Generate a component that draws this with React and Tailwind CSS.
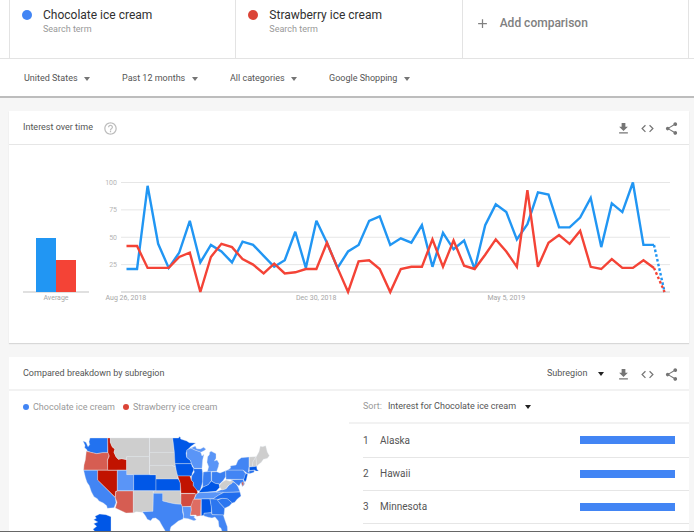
import { MdAdd, MdCode, MdGetApp, MdHelpOutline, MdShare } from "react-icons/md";

const BLUE = "#2196f3";
const RED = "#f44336";

const chocolate = [
  21, 21, 97, 44, 22, 36, 65, 27, 43, 37, 27, 46, 43, 33, 23, 29, 55, 22, 65,
  45, 22, 37, 43, 65, 69, 43, 49, 45, 61, 23, 54, 39, 47, 21, 61, 80, 73, 48,
  62, 91, 89, 59, 59, 68, 86, 41, 81, 73, 100, 43, 43, 0,
];
const strawberry = [
  42, 42, 22, 22, 22, 32, 36, 0, 32, 44, 41, 30, 25, 17, 26, 17, 18, 21, 21,
  45, 22, 0, 28, 29, 21, 0, 21, 23, 23, 48, 23, 47, 24, 21, 34, 48, 37, 23,
  93, 23, 45, 52, 44, 56, 23, 21, 30, 22, 22, 29, 22, 0,
];

const terms = [
  { name: "Chocolate ice cream", dot: "bg-[#4285f4]" },
  { name: "Strawberry ice cream", dot: "bg-[#db4437]" },
];

const filters = [
  { label: "Region", value: "United States" },
  { label: "Time range", value: "Past 12 months" },
  { label: "Category", value: "All categories" },
  { label: "Search type", value: "Google Shopping" },
];

const regions = ["Alaska", "Hawaii", "Minnesota"];

// fill + outline of every state on the map
const states = [
  ["#2272f0", "249,273 258,277 264,290 269,284 267,275 270,264 323,264 323,308 308,308 290,311 272,307 262,303 259,297 254,294 255,286"],
  ["#d65d52", "259,304 272,307 290,311 308,308 325,308 327,318 322,330 323,360 251,360 252,345 256,330"],
  ["#4285f4", "251,361 293,361 293,390 346,443 348,458 342,473 322,475 320,467 310,459 297,453 292,446 282,440 274,425 268,407 261,397 256,382"],
  ["#c11300", "293,361 352,361 352,422 347,424 345,441 293,390"],
  ["#c11300", "323,264 331,264 331,277 337,291 345,297 342,307 348,320 355,328 365,326 380,329 380,360 323,360 323,330 328,318 324,308"],
  ["#cecece", "331,264 448,264 448,320 380,320 380,328 365,326 355,328 348,320 342,307 345,297 337,291 331,277"],
  ["#cecece", "380,320 448,320 448,374 380,374"],
  ["#5a95f7", "352,361 380,361 380,374 401,374 401,422 352,422"],
  ["#0057e7", "401,374 468,374 468,422 401,422"],
  ["#d65d52", "352,423 400,423 400,488 378,489 346,474 351,457 346,443 347,426"],
  ["#cecece", "400,423 459,423 459,484 427,484 427,487 408,485 400,489"],
  ["#cecece", "449,264 518,264 520,285 523,307 449,307"],
  ["#cecece", "449,307 523,307 525,320 525,350 515,346 449,346"],
  ["#cecece", "449,346 515,346 526,351 530,365 534,387 468,387 468,374 449,374"],
  ["#0057e7", "468,387 535,387 541,398 541,422 468,422"],
  ["#cecece", "460,423 541,423 543,440 543,462 528,462 512,459 488,453 488,430 460,430"],
  ["#4285f4", "460,430 488,430 488,453 512,459 528,462 545,463 547,471 548,488 551,498 549,507 535,513 525,521 513,530 510,540 513,556 500,552 494,540 485,525 478,512 467,504 458,505 452,512 442,508 436,497 427,485 459,484"],
  ["#0057e7", "518,264 536,264 537,260 541,261 542,267 560,273 568,278 587,279 573,289 563,299 558,309 560,322 572,332 574,341 525,341 523,305"],
  ["#0057e7", "525,341 574,341 577,350 583,357 577,369 575,378 533,378 529,362"],
  ["#c11300", "533,378 570,378 574,390 580,397 580,407 590,416 593,428 588,436 584,430 543,430 541,400"],
  ["#d34b3f", "543,431 588,431 582,448 574,469 547,470 543,460"],
  ["#5a95f7", "547,470 573,470 574,483 571,497 584,498 582,502 589,509 582,512 565,506 550,504 551,495"],
  ["#5a95f7", "560,300 573,294 585,300 602,306 606,318 612,313 608,330 606,355 582,355 574,340 572,332 560,322"],
  ["#5a95f7", "573,294 586,288 590,296 601,297 611,292 618,298 612,302 604,306 602,306 585,300"],
  ["#5a95f7", "622,365 626,350 621,337 623,320 628,314 629,306 634,304 648,311 648,325 643,333 651,330 657,340 655,350 650,364"],
  ["#1f6cee", "580,356 606,356 608,370 608,395 604,410 600,422 592,422 580,407 580,397 574,390 575,378 583,366"],
  ["#3a7ff2", "610,366 633,364 634,392 625,404 608,412 608,395"],
  ["#3a7ff2", "635,366 650,365 660,369 677,362 677,380 670,391 659,402 645,400 635,393"],
  ["#0057e7", "598,425 608,412 625,404 634,393 645,400 657,402 660,411 648,424 597,428"],
  ["#5a95f7", "583,447 590,431 597,428 650,426 672,426 655,436 640,446"],
  ["#de6d63", "580,448 603,448 602,497 590,499 588,495 571,495 574,480 573,468"],
  ["#0057e7", "604,447 630,447 634,470 634,488 612,490 612,496 604,497"],
  ["#2c76ef", "630,447 652,447 660,460 674,475 672,495 636,494 634,470"],
  ["#4285f4", "612,490 634,488 636,494 670,495 674,508 682,530 683,550 668,550 663,535 657,530 655,513 645,501 636,504 625,502 612,498"],
  ["#2c76ef", "652,450 667,445 682,446 697,458 688,468 674,475 660,460"],
  ["#1f6cee", "640,446 655,436 672,427 720,426 723,438 712,447 704,457 697,459 682,446 667,445 652,448"],
  ["#4285f4", "648,426 662,420 678,416 690,402 698,395 708,401 714,410 720,425 680,427"],
  ["#cecece", "657,408 666,397 678,390 690,394 702,390 695,401 685,406 678,416 666,420"],
  ["#3a7ff2", "692,389 729,388 734,402 727,410 723,398 717,408 708,401 698,392"],
  ["#d34b3f", "725,397 730,396 731,406 727,407"],
  ["#4285f4", "677,362 683,360 729,360 737,371 733,386 729,388 678,388"],
  ["#4285f4", "683,360 692,354 691,348 708,345 714,331 724,323 747,321 747,350 745,365 762,365 743,371 729,360"],
  ["#0057e7", "737,370 743,373 739,390 735,397 731,389"],
  ["#cecece", "748,321 768,320 759,335 757,350 748,350"],
  ["#cecece", "768,320 770,340 770,349 757,350 759,335"],
  ["#cecece", "768,322 777,305 781,289 788,290 797,287 802,307 808,317 802,325 790,328 784,337 776,343 770,349"],
  ["#0057e7", "748,351 770,349 771,358 776,363 768,363 763,360 748,362"],
  ["#1f6cee", "747,363 763,361 762,367 748,371"],
  ["#0057e7", "281,509 289,505 285,499 299,492 318,494 333,500 333,560 276,560 287,547 279,538 290,529 281,521 293,516"],
];

// 100 on the scale is 110 units tall
const pointAt = (v, i) => `${26.5 + i * 10.55},${122 - v * 1.095}`;

function Series({ data, color }) {
  const points = data.map(pointAt);
  return (
    <g fill="none" stroke={color} strokeWidth="2.4" strokeMiterlimit="3">
      <polyline points={points.slice(0, -1).join(" ")} />
      <polyline points={points.slice(-2).join(" ")} strokeDasharray="2.6 2.2" />
    </g>
  );
}

function Arrow({ className }) {
  return (
    <svg viewBox="0 0 6 4" className={`pointer-events-none h-1 w-1.5 ${className}`}>
      <path d="M0 0h6L3 4z" fill="currentColor" />
    </svg>
  );
}

function Dropdown({ label, value, gap = "gap-1.5", arrow = "text-[#757575]" }) {
  return (
    <label className={`flex items-center ${gap}`}>
      <select aria-label={label} className="appearance-none bg-transparent text-[#555]">
        <option>{value}</option>
      </select>
      <Arrow className={arrow} />
    </label>
  );
}

function Actions() {
  return (
    <div className="flex items-center gap-[9px] text-[15px] text-[#757575]">
      <button aria-label="Download"><MdGetApp /></button>
      <button aria-label="Embed"><MdCode /></button>
      <button aria-label="Share"><MdShare /></button>
    </div>
  );
}

function LineChart() {
  return (
    <svg viewBox="0 0 574 136" className="min-w-0 flex-1" fontFamily="Roboto, sans-serif" fontSize="7">
      {[100, 75, 50, 25].map((v) => (
        <g key={v}>
          <line x1="21" x2="570" y1={122 - v * 1.095} y2={122 - v * 1.095} stroke="#e6e6e6" />
          <text x="17" y={124.5 - v * 1.095} textAnchor="end" fill="#b5b5b5">{v}</text>
        </g>
      ))}
      <line x1="21" x2="570" y1="122" y2="122" stroke="#e0e0e0" strokeWidth="2" />
      <Series data={chocolate} color={BLUE} />
      <Series data={strawberry} color={RED} />
      <g fill="#a6a6a6">
        <text x="5.5" y="130">Aug 26, 2018</text>
        <text x="196" y="130">Dec 30, 2018</text>
        <text x="387.5" y="130">May 5, 2019</text>
      </g>
    </svg>
  );
}

function App() {
  return (
    <div className="h-screen overflow-hidden border-b border-[#666] bg-[#f6f6f6] font-[Roboto,sans-serif] text-[#555]">
      <header className="border-b-2 border-[#bdbdbd] bg-white">
        <div className="border-b border-[#e3e3e3] pl-[9px] pr-[5px]">
          <div className="grid h-[58px] grid-cols-3 border-r border-[#e3e3e3]">
            {terms.map((t) => (
              <div key={t.name} className="flex gap-[11px] border-l border-[#e3e3e3] pl-3 pt-2">
                <span className={`mt-0.5 size-2.5 rounded-full ${t.dot}`}></span>
                <div>
                  <h2 className="text-[12px] leading-[14px] text-[#303030]">{t.name}</h2>
                  <p className="text-[9px] leading-[14px] text-[#999]">Search term</p>
                </div>
              </div>
            ))}
            <button className="flex items-center gap-2.5 border-l border-[#e3e3e3] pb-3 pl-3 text-[12px] font-medium text-[#808080]">
              <MdAdd className="text-[15px]" />
              Add comparison
            </button>
          </div>
        </div>
        <div className="flex h-[37px] items-center gap-8 pl-6 pt-0.5 text-[9px]">
          {filters.map((f) => (
            <Dropdown key={f.label} {...f} />
          ))}
        </div>
      </header>

      <main className="flex flex-col gap-3.5 pb-3.5 pl-[9px] pr-[5px] pt-[13px]">
        <section className="bg-white shadow-[0_1px_1px_#d8d8d8]">
          <div className="flex h-[34px] items-center border-b border-[#e6e6e6] pl-3.5 pr-2.5 pt-px">
            <h3 className="text-[9px]">Interest over time</h3>
            <button aria-label="Help" className="ml-2.5 mr-auto text-[15px] text-[#bdbdbd]">
              <MdHelpOutline />
            </button>
            <Actions />
          </div>
          <div className="flex items-start pb-[37px] pl-3.5 pr-[15px] pt-[25px]">
            <svg viewBox="0 0 66 136" className="mr-[11px] w-[66px]" fontFamily="Roboto, sans-serif" fontSize="7">
              <line x1="0" x2="66" y1="122" y2="122" stroke="#e0e0e0" strokeWidth="2" />
              <rect x="13" y="68" width="20" height="54" fill={BLUE} />
              <rect x="33" y="90" width="20" height="32" fill={RED} />
              <text x="33" y="130" textAnchor="middle" fill="#a6a6a6">Average</text>
            </svg>
            <LineChart />
          </div>
        </section>

        <section className="bg-white">
          <div className="flex h-[34px] items-center border-b-2 border-[#f2f2f2] pl-3.5 pr-2.5 pt-0.5 text-[9px]">
            <h3 className="mr-auto">Compared breakdown by subregion</h3>
            <div className="mr-3">
              <Dropdown label="Resolution" value="Subregion" gap="gap-2.5" arrow="text-[#212121]" />
            </div>
            <Actions />
          </div>
          <div className="grid grid-cols-2">
            <div className="pl-3.5 pt-2.5">
              <div className="flex gap-2 text-[9px] leading-3 text-[#999]">
                {terms.map((t) => (
                  <span key={t.name} className="flex items-center gap-1">
                    <span className={`size-1.5 rounded-full ${t.dot}`}></span>
                    {t.name}
                  </span>
                ))}
              </div>
              <svg viewBox="240 255 600 330" className="ml-[57px] mt-[22px] w-[200px]">
                {states.map(([fill, points], i) => (
                  <polygon key={i} points={points} fill={fill} stroke="#e6eaf0" strokeOpacity="0.75" strokeWidth="1.4" />
                ))}
              </svg>
            </div>
            <div>
              <div className="flex h-[33px] items-center gap-1.5 border-b-2 border-[#f2f2f2] pl-3.5 pt-px text-[9px]">
                <span className="text-[#999]">Sort:</span>
                <Dropdown label="Sort" value="Interest for Chocolate ice cream" gap="gap-2" arrow="text-[#212121]" />
              </div>
              <div className="pl-3.5">
                <table className="w-full text-left text-[10px]">
                  <tbody>
                    {regions.map((r, i) => (
                      <tr key={r} className="h-[33px] border-b border-[#e6e6e6]">
                        <td className="w-[17px]">{i + 1}</td>
                        <td>{r}</td>
                        <td className="w-[109px] pr-3.5">
                          <div className="h-2 bg-[#4285f4]"></div>
                        </td>
                      </tr>
                    ))}
                  </tbody>
                </table>
              </div>
            </div>
          </div>
        </section>
      </main>
    </div>
  );
}

export default App;
